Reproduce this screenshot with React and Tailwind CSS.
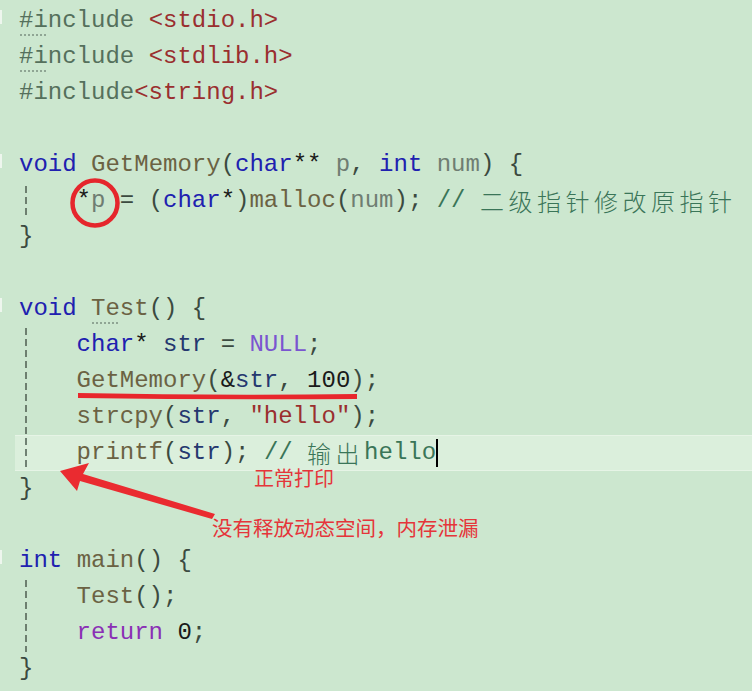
import React from 'react';

// token colour classes, VS-style on eye-care green
const K = 'text-[#2020b0]';
const F = 'text-[#6b6243]';
const P = 'text-[#3b4a40]';
const V = 'text-[#6f7d72]';
const S = 'text-[#25386f]';
const M = 'text-[#7a55d0]';
const R = 'text-[#8a2fb5]';
const Q = 'text-[#9a2f2f]';
const N = 'text-[#1a1a1a]';
const C = 'text-[#3a7558]';
const I = 'text-[#55705c]';

const LINES = [
    [['#include ', I], ['<stdio.h>', Q]],
    [['#include ', I], ['<stdlib.h>', Q]],
    [['#include', I], ['<string.h>', Q]],
    [],
    [['void', K], [' '], ['GetMemory', F], ['(', P], ['char', K], ['**', N], [' p', V], [', ', P], ['int', K], [' num', V], [') {', P]],
    [['    '], ['*', N], ['p', V], [' = (', P], ['char', K], ['*', N], [')', P], ['malloc', F], ['(', P], ['num', V], ['); ', P], ['// ', C], ['二级指针修改原指针', C, true]],
    [['}', P]],
    [],
    [['void', K], [' '], ['Test', F], ['() {', P]],
    [['    '], ['char', K], ['*', N], [' str', S], [' = ', P], ['NULL', M], [';', P]],
    [['    '], ['GetMemory', F], ['(', P], ['&', N], ['str', S], [', ', P], ['100', N], [');', P]],
    [['    '], ['strcpy', F], ['(', P], ['str', S], [', ', P], ['"hello"', Q], [');', P]],
    [['    '], ['printf', F], ['(', P], ['str', S], ['); ', P], ['// ', C], ['输出', C, true], ['hello', C]],
    [['}', P]],
    [],
    [['int', K], [' '], ['main', F], ['() {', P]],
    [['    '], ['Test', F], ['();', P]],
    [['    '], ['return', R], [' '], ['0', N], [';', P]],
    [['}', P]],
];

const Line = ({ tokens, current }) => (
    <div
        className={
            current
                ? 'ml-[15px] pl-[4px] h-[36px] flex items-center whitespace-pre bg-[#dbefdc] border-y border-[#e6f4e6]'
                : 'ml-[15px] pl-[4px] h-[36px] flex items-center whitespace-pre'
        }
    >
        {tokens.map(([t, c, cjk], i) =>
            cjk ? (
                <span key={i} className={`${c} text-[24px] tracking-[4.5px] font-['Noto_Sans_CJK_SC',sans-serif] font-light`}>{t}</span>
            ) : (
                <span key={i} className={c}>{t}</span>
            )
        )}
        {current && <span className="w-[2px] h-[28px] bg-black" />}
    </div>
);

const App = () => {
    return (
        <div className="relative w-[752px] h-[691px] overflow-hidden bg-[#cce7cf] pt-[3px] text-[24px] leading-[36px] font-['Liberation_Mono',monospace] text-[#333]">
            <div className="flex flex-col">
                {LINES.map((tokens, i) => (
                    <Line key={i} tokens={tokens} current={i === 12} />
                ))}
            </div>

            {/* gutter ticks */}
            <div className="absolute left-0 top-[10px] w-[2px] h-[14px] bg-[#eef6ee]" />
            <div className="absolute left-0 top-[154px] w-[2px] h-[14px] bg-[#eef6ee]" />
            <div className="absolute left-0 top-[298px] w-[2px] h-[14px] bg-[#eef6ee]" />
            <div className="absolute left-0 top-[550px] w-[2px] h-[14px] bg-[#eef6ee]" />

            {/* squiggle hints */}
            <div className="absolute left-[20px] top-[34px] w-[26px] border-t-2 border-dotted border-[#8fa594]" />
            <div className="absolute left-[20px] top-[70px] w-[26px] border-t-2 border-dotted border-[#8fa594]" />
            <div className="absolute left-[92px] top-[322px] w-[26px] border-t-2 border-dotted border-[#8fa594]" />

            {/* annotations */}
            <svg className="absolute inset-0 pointer-events-none" width="752" height="691">
                <g stroke="#4d5d50" strokeWidth="1.5" strokeDasharray="7 4">
                    <line x1="26" y1="186" x2="26" y2="216" />
                    <line x1="26" y1="328" x2="26" y2="468" />
                    <line x1="26" y1="580" x2="26" y2="652" />
                </g>
                <circle cx="95" cy="203" r="22.5" fill="none" stroke="#e5262c" strokeWidth="4.5" />
                <path d="M78 393 Q220 396 357 394 L357 399 Q220 400 78 398 Z" fill="#e8262c" />
                <polygon points="60,471 89,463 83,474 215,514 212,519 80,481 77,491" fill="#ea2b30" />
            </svg>
            <div className="absolute left-[254px] top-[466px] text-[20px] leading-[24px] text-[#e5353a] font-['Noto_Sans_CJK_SC',sans-serif]">
                正常打印
            </div>
            <div className="absolute left-[212px] top-[512px] text-[20.5px] leading-[30px] text-[#e5353a] font-['Noto_Sans_CJK_SC',sans-serif]">
                没有释放动态空间，内存泄漏
            </div>
        </div>
    );
};

export default App;
